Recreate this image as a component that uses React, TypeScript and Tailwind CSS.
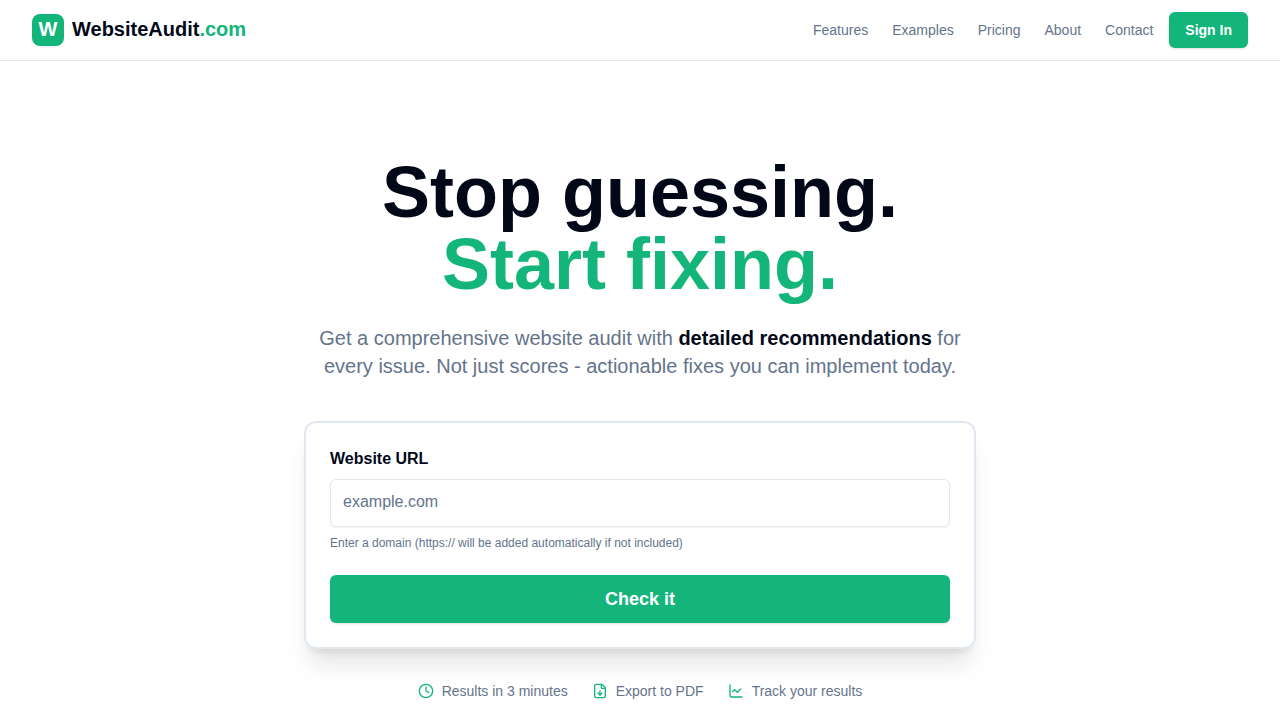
import { Clock, ChartLine, FileDown } from "lucide-react"

const navLinks = ["Features", "Examples", "Pricing", "About", "Contact"]

const perks = [
  { icon: Clock, label: "Results in 3 minutes" },
  { icon: FileDown, label: "Export to PDF" },
  { icon: ChartLine, label: "Track your results" },
]

function Header() {
  return (
    <header className="border-b border-[#e2e8f0] bg-white">
      <div className="flex h-15 items-center justify-between px-8">
        <a href="#" className="flex items-center gap-2">
          <span className="flex size-8 items-center justify-center rounded-lg bg-[#13b57b] pb-0.5 text-xl font-bold text-white">
            W
          </span>
          <span className="pb-0.5 text-xl font-bold">
            WebsiteAudit<span className="text-[#13b57b]">.com</span>
          </span>
        </a>
        <div className="flex items-center gap-4">
          <nav className="flex items-center gap-6">
            {navLinks.map((link) => (
              <a key={link} href="#" className="text-sm text-[#64748b] hover:text-[#020817]">
                {link}
              </a>
            ))}
          </nav>
          <button className="h-9 rounded-md bg-[#13b57b] px-4 text-sm font-bold text-white shadow-sm">
            Sign In
          </button>
        </div>
      </div>
    </header>
  )
}

function AuditForm() {
  return (
    <form
      className="rounded-xl border-2 border-[#e2e8f0] bg-white p-6 shadow-xl"
      onSubmit={(e) => e.preventDefault()}
    >
      <label htmlFor="url" className="block text-base font-bold">
        Website URL
      </label>
      <input
        id="url"
        type="text"
        placeholder="example.com"
        className="mt-2 h-12 w-full rounded-md border border-[#e2e8f0] px-3 pb-0.5 text-base shadow-xs placeholder:text-[#64748b]"
      />
      <p className="mt-2 text-xs text-[#64748b]">
        Enter a domain (https:// will be added automatically if not included)
      </p>
      <button
        type="submit"
        className="mt-6 h-12 w-full rounded-md bg-[#13b57b] text-lg font-bold text-white shadow-sm"
      >
        Check it
      </button>
    </form>
  )
}

export default function App() {
  return (
    <div className="min-h-screen bg-white font-['Liberation_Sans',Arial,sans-serif] text-[#020817]">
      <Header />
      <main className="px-8 pt-[95px] text-center">
        <h1 className="text-7xl leading-none font-bold">
          Stop guessing.
          <br />
          <span className="text-[#13b57b]">Start fixing.</span>
        </h1>
        <p className="mx-auto mt-6 max-w-2xl text-xl text-[#64748b]">
          Get a comprehensive website audit with{" "}
          <strong className="font-bold text-[#020817]">detailed recommendations</strong> for every
          issue. Not just scores - actionable fixes you can implement today.
        </p>
        <div className="mx-auto mt-[41px] max-w-2xl text-left">
          <AuditForm />
        </div>
        <ul className="mt-8 flex justify-center gap-6">
          {perks.map(({ icon: Icon, label }) => (
            <li key={label} className="flex items-center gap-2 text-sm text-[#64748b]">
              <Icon className="size-4 text-[#13b57b]" />
              {label}
            </li>
          ))}
        </ul>
      </main>
    </div>
  )
}
